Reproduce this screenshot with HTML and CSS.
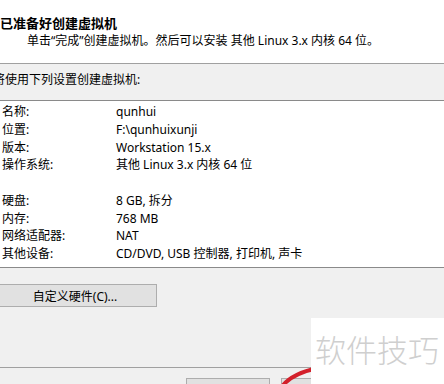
FILE: index.html
```html
<!DOCTYPE html>
<html lang="zh-CN">
<head>
  <meta charset="UTF-8"/>
  <title>新建虚拟机向导</title>
  <link rel="stylesheet" href="styles.css">
</head>
<body>

  <!-- Header -->
  <div class="wizard-head">
    <h1>已准备好创建虚拟机</h1>
    <p>单击“完成”创建虚拟机。然后可以安装 其他 Linux 3.x 内核 64 位。</p>
  </div>

  <!-- Body -->
  <div class="wizard-body">
    <div class="intro">将使用下列设置创建虚拟机:</div>

    <div class="summary">
      <span>名称:</span><span>qunhui</span>
      <span>位置:</span><span>F:\qunhuixunji</span>
      <span>版本:</span><span>Workstation 15.x</span>
      <span>操作系统:</span><span>其他 Linux 3.x 内核 64 位</span>
      <span class="gap"></span><span class="gap"></span>
      <span>硬盘:</span><span>8 GB, 拆分</span>
      <span>内存:</span><span>768 MB</span>
      <span>网络适配器:</span><span>NAT</span>
      <span>其他设备:</span><span>CD/DVD, USB 控制器, 打印机, 声卡</span>
    </div>

    <div class="hw-row">
      <button class="btn hw-btn">自定义硬件(C)...</button>
    </div>
  </div>

  <!-- Footer (button captions lie below the visible area) -->
  <div class="wizard-foot">
    <button class="btn" aria-label="上一步"></button>
    <button class="btn" aria-label="完成"></button>
  </div>

  <!-- Annotation & watermark -->
  <svg class="mark" width="60" height="30" viewBox="270 360 60 30">
    <path d="M281 388 Q290 374 318 368" fill="none" stroke="#d3202b" stroke-width="4"/>
  </svg>
  <div class="watermark">软件技巧</div>

</body>
</html>
```

FILE: styles.css
```css
* { margin:0; padding:0; box-sizing:border-box }
body {
  font-family:"Noto Sans","Noto Sans CJK SC",sans-serif;
  font-size:12px;
  color:#000;
  background:#f0f0f0;
  width:444px; height:384px;
  overflow:hidden;
  position:relative;
}

/* Header */
.wizard-head {
  background:#fff;
  height:64px;
  border-bottom:1px solid #a0a0a0;
  padding-top:14px;
}
.wizard-head h1 {
  font-size:13px; font-weight:700;
  line-height:18px;
}
.wizard-head p {
  padding-left:27px;
  line-height:18px;
}

/* Body */
.wizard-body { margin-left:-7px }
.intro {
  line-height:18px;
  padding-top:7px;
  height:36px;
}
.summary {
  background:#fff;
  border-top:1px solid #8a8a8a;
  border-bottom:1px solid #8a8a8a;
  height:168px;
  padding:2px 0 0 9px;
  display:grid;
  grid-template-columns:114px 1fr;
  grid-auto-rows:17.75px;
  line-height:17.75px;
  white-space:nowrap;
}
.hw-row { padding-top:16px; height:100px }
.btn {
  font:inherit;
  background:#e1e1e1;
  border:1px solid #adadad;
  height:23px;
  color:#000;
}
.hw-btn { width:164px }

/* Footer */
.wizard-foot {
  border-top:1px solid #a0a0a0;
  margin-top:-1px;
  padding:10px 0 0 186px;
  display:flex; gap:11px;
}
.wizard-foot .btn { width:84px }

/* Overlays */
.mark { position:absolute; left:270px; top:360px }
.watermark {
  position:absolute; left:311px; top:318px;
  width:133px; height:66px;
  background:#fff;
  color:#cfcfcf;
  font-family:"Noto Sans CJK SC",sans-serif;
  font-size:31px; font-weight:300;
  line-height:62px;
  padding-left:4px;
  white-space:nowrap;
}
```
